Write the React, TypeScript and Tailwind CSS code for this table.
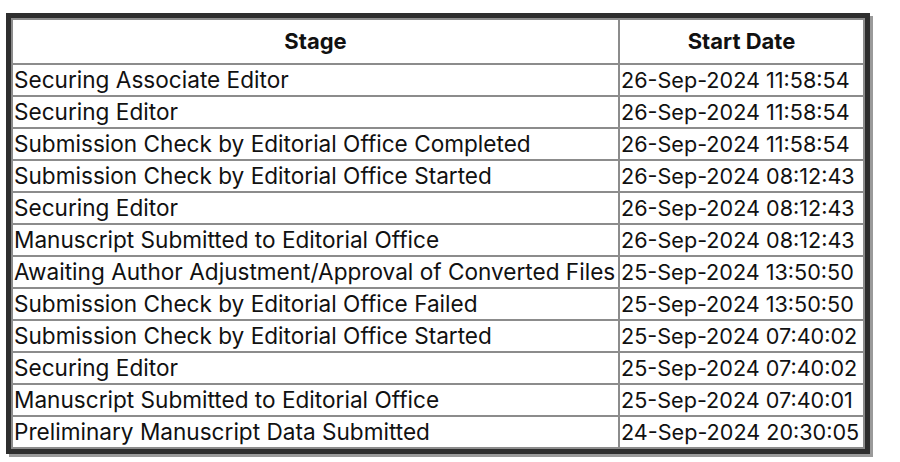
import React from 'react';

const ROWS: [string, string][] = [
  ['Securing Associate Editor', '26-Sep-2024 11:58:54'],
  ['Securing Editor', '26-Sep-2024 11:58:54'],
  ['Submission Check by Editorial Office Completed', '26-Sep-2024 11:58:54'],
  ['Submission Check by Editorial Office Started', '26-Sep-2024 08:12:43'],
  ['Securing Editor', '26-Sep-2024 08:12:43'],
  ['Manuscript Submitted to Editorial Office', '26-Sep-2024 08:12:43'],
  ['Awaiting Author Adjustment/Approval of Converted Files', '25-Sep-2024 13:50:50'],
  ['Submission Check by Editorial Office Failed', '25-Sep-2024 13:50:50'],
  ['Submission Check by Editorial Office Started', '25-Sep-2024 07:40:02'],
  ['Securing Editor', '25-Sep-2024 07:40:02'],
  ['Manuscript Submitted to Editorial Office', '25-Sep-2024 07:40:01'],
  ['Preliminary Manuscript Data Submitted', '24-Sep-2024 20:30:05'],
];

const App: React.FC = () => {
  return (
    <div className="w-[900px] h-[462px] bg-white pt-[13px] pl-[6px] font-['Inter',sans-serif] text-[#111]">
      {/* Stage history table */}
      <div className="w-[864px] border-[5px] border-[#2e2e2e] shadow-[3px_3px_0_#9a9a9a]">
        <table className="w-full table-fixed border-collapse border-2 border-[#8c8c8c]">
          <thead>
            <tr className="h-[45px]">
              <th className="w-[607px] border-2 border-[#8c8c8c] text-center text-[22px] font-bold">Stage</th>
              <th className="border-2 border-[#8c8c8c] text-center text-[22px] font-bold">Start Date</th>
            </tr>
          </thead>
          <tbody>
            {ROWS.map(([stage, date], idx) => (
              <tr key={idx} className="h-[32px]">
                <td className="border-2 border-[#8c8c8c] px-[1px] text-[22.6px] leading-[28px] whitespace-nowrap overflow-hidden">{stage}</td>
                <td className="border-2 border-[#8c8c8c] px-[1px] text-[21.6px] leading-[28px] whitespace-nowrap overflow-hidden">{date}</td>
              </tr>
            ))}
          </tbody>
        </table>
      </div>
    </div>
  );
};

export default App;
